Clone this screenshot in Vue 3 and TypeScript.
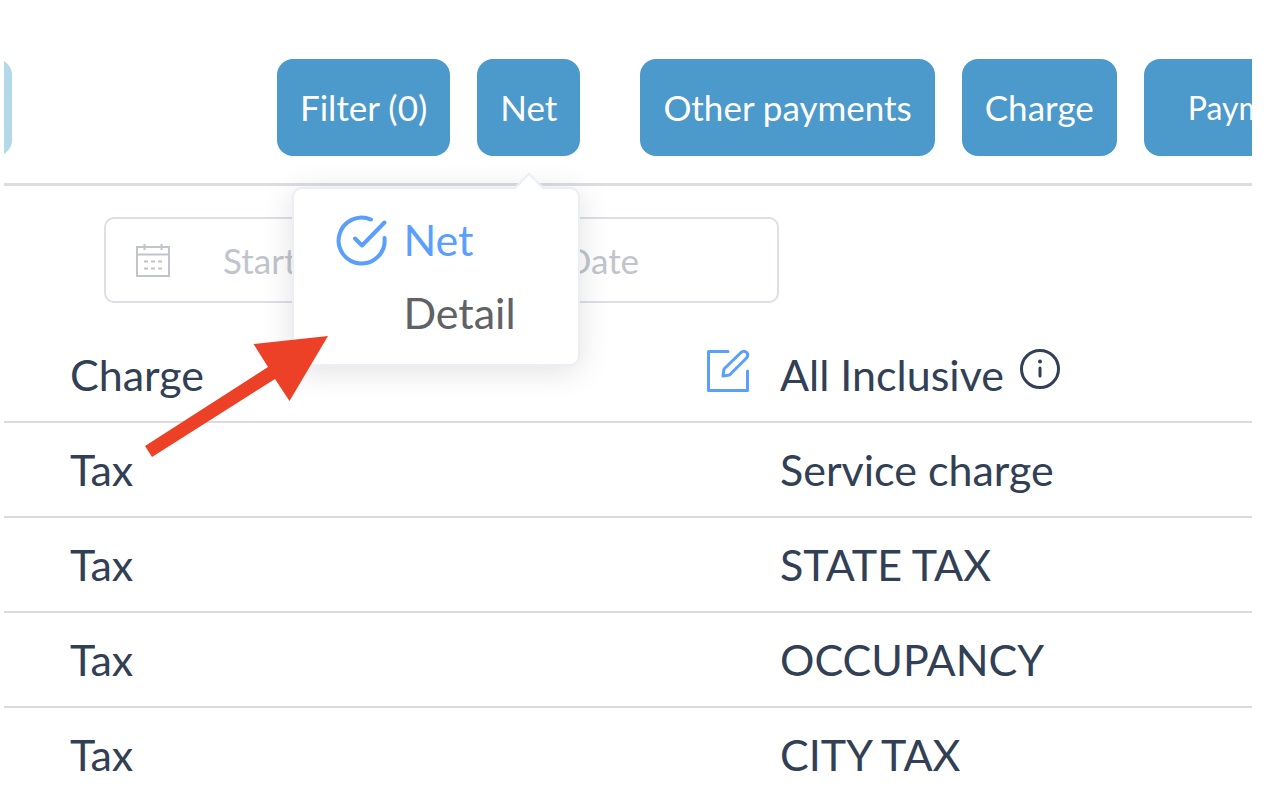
<script setup lang="ts">
import { ref } from 'vue'

interface Row {
  type: string
  description: string
  editable?: boolean
}

const rows: Row[] = [
  { type: 'Charge', description: 'All Inclusive', editable: true },
  { type: 'Tax', description: 'Service charge' },
  { type: 'Tax', description: 'STATE TAX' },
  { type: 'Tax', description: 'OCCUPANCY' },
  { type: 'Tax', description: 'CITY TAX' },
]

const modes = ['Net', 'Detail']
const mode = ref('Net')
const startDate = ref('')
const endDate = ref('')
</script>

<template>
  <main class="page">
    <header class="toolbar">
      <button class="btn btn-disabled" type="button" disabled aria-label="Unavailable action"></button>
      <button class="btn btn-filter" type="button">Filter (0)</button>
      <div class="dropdown">
        <button class="btn" type="button" aria-haspopup="menu" aria-expanded="true">{{ mode }}</button>
        <div class="menu" role="menu">
          <button
            v-for="item in modes"
            :key="item"
            class="menu-item"
            :class="{ active: item === mode }"
            type="button"
            role="menuitemradio"
            :aria-checked="item === mode"
            @click="mode = item"
          >
            <span class="menu-icon">
              <svg v-if="item === mode" viewBox="0 0 50 50" fill="none" stroke="currentColor" stroke-width="4" stroke-linecap="round" stroke-linejoin="round" aria-hidden="true">
                <path d="M34 4.500A23 23 0 1 0 47.500 23" />
                <path d="M18 23.500L25 30.500L47.500 7.500" />
              </svg>
            </span>
            {{ item }}
          </button>
        </div>
      </div>
      <button class="btn btn-other" type="button">Other payments</button>
      <button class="btn" type="button">Charge</button>
      <button class="btn btn-payment" type="button">Payment</button>
    </header>

    <section class="filters">
      <div class="range">
        <svg class="calendar" viewBox="0 0 34 34" fill="none" stroke="currentColor" stroke-width="2" aria-hidden="true">
          <path d="M1 4H33V33H1ZM1 11.500H33M8.500 1V7M25.500 1V7" />
          <path d="M8 18.500H12M15 18.500H19M22 18.500H26M8 25.500H12M15 25.500H19M22 25.500H26" />
        </svg>
        <input v-model="startDate" class="date" type="text" placeholder="Start Date" aria-label="Start Date" />
        <input v-model="endDate" class="date" type="text" placeholder="End Date" aria-label="End Date" />
      </div>
    </section>

    <table class="entries">
      <tbody>
        <tr v-for="row in rows" :key="row.description">
          <td class="type">{{ row.type }}</td>
          <td class="action">
            <button v-if="row.editable" class="icon-btn" type="button" aria-label="Edit">
              <svg viewBox="0 0 42 42" fill="none" stroke="currentColor" stroke-width="3" stroke-linecap="round" stroke-linejoin="round" aria-hidden="true">
                <path d="M21 1.500H1.500V40.500H40.500V21" />
                <path d="M16 26L17 19L34 2.500Q37 0 39.700 2.500Q42 5 39.500 8L22.500 25Z" />
              </svg>
            </button>
          </td>
          <td>
            <div class="description">
              {{ row.description }}
              <svg v-if="row.editable" class="info" viewBox="0 0 40 40" fill="none" stroke="currentColor" stroke-width="3" aria-hidden="true">
                <circle cx="20" cy="20" r="18.500" />
                <circle cx="20" cy="12.500" r="2" fill="currentColor" stroke="none" />
                <path d="M20 19V27" stroke-linecap="round" />
              </svg>
            </div>
          </td>
        </tr>
      </tbody>
    </table>

    <svg class="pointer" viewBox="0 0 184 122" aria-hidden="true">
      <path d="M1 110L124 31L109.500 8L184 0L145.500 65L131 43L8 121Z" fill="#ec4126" />
    </svg>
  </main>
</template>

<style>
body {
  margin: 0;
  background: #fff;
}
</style>

<style scoped>
.page {
  position: relative;
  margin: 0 18px 0 4px;
  overflow: hidden;
  background: #fff;
  color: #324055;
  font-family: Lato, "Liberation Sans", sans-serif;
  font-size: 43px;
}

button,
input {
  font: inherit;
}

.toolbar {
  display: flex;
  gap: 27px;
  padding: 59px 0 27px;
  border-bottom: 3px solid #dcdde2;
}

.btn {
  flex: none;
  height: 97px;
  padding: 0 23px 2px;
  border: 0;
  border-radius: 16px;
  background: #4c99cb;
  color: #fff;
  font-size: 35px;
  line-height: 44px;
  white-space: nowrap;
}

.btn-disabled {
  width: 80px;
  margin-left: -72px;
  background: #b3d8ea;
}

.btn-filter {
  margin-left: 238px;
}

.btn-other {
  margin-left: 33px;
}

.btn-payment {
  padding: 0 44px;
  font-size: 32px;
}

.dropdown {
  position: relative;
  flex: none;
}

.menu {
  position: absolute;
  z-index: 2;
  top: 128px;
  right: 0;
  box-sizing: border-box;
  width: 288px;
  padding: 14px 0 15px;
  border: 2px solid #ebeef5;
  border-radius: 10px;
  background: #fff;
  box-shadow: 0 5px 32px rgba(0, 0, 0, 0.12);
}

.menu::before {
  content: "";
  position: absolute;
  top: -12px;
  right: 38px;
  width: 20px;
  height: 20px;
  border: solid #ebeef5;
  border-width: 2px 0 0 2px;
  background: linear-gradient(135deg, #fff 50%, transparent 50%);
  transform: rotate(45deg);
}

.menu-item {
  display: flex;
  align-items: center;
  gap: 16px;
  width: 100%;
  height: 73px;
  padding: 0 43px;
  border: 0;
  background: none;
  color: #606266;
  text-align: left;
}

.menu-item.active {
  color: #5b9ffc;
}

.menu-icon {
  flex: none;
  width: 50px;
  height: 50px;
}

.menu-icon svg,
.icon-btn svg {
  display: block;
  overflow: visible;
}

.filters {
  padding: 31px 100px 25px;
}

.range {
  display: flex;
  align-items: center;
  box-sizing: border-box;
  width: 675px;
  max-width: 100%;
  height: 86px;
  padding: 0 6px 0 30px;
  border: 2px solid #dcdfe6;
  border-radius: 10px;
  color: #c0c4cc;
}

.calendar {
  flex: none;
  width: 34px;
  height: 34px;
  margin-right: 53px;
}

.date {
  min-width: 0;
  flex: 1;
  padding: 0;
  border: 0;
  outline: 0;
  background: none;
  color: #606266;
  font-size: 35px;
  line-height: 44px;
}

.date::placeholder {
  color: #c0c4cc;
  opacity: 1;
}

.entries {
  width: 100%;
  border-collapse: separate;
  border-spacing: 0;
  table-layout: fixed;
}

.entries td {
  box-sizing: border-box;
  height: 95px;
  padding: 0;
  border-bottom: 2px solid #d9dbe0;
  white-space: nowrap;
}

.entries tr:last-child td {
  border-bottom-color: transparent;
}

.entries .type {
  width: 703px;
  padding-left: 66px;
}

.entries .action {
  width: 73px;
}

.icon-btn {
  display: block;
  width: 42px;
  height: 42px;
  margin-bottom: 8px;
  padding: 0;
  border: 0;
  background: none;
  color: #5b9ffc;
}

.description {
  display: flex;
  align-items: center;
  gap: 16px;
}

.info {
  width: 40px;
  height: 40px;
  margin-bottom: 12px;
}

.pointer {
  position: absolute;
  z-index: 3;
  top: 336px;
  left: 140px;
  width: 184px;
  height: 122px;
}
</style>
